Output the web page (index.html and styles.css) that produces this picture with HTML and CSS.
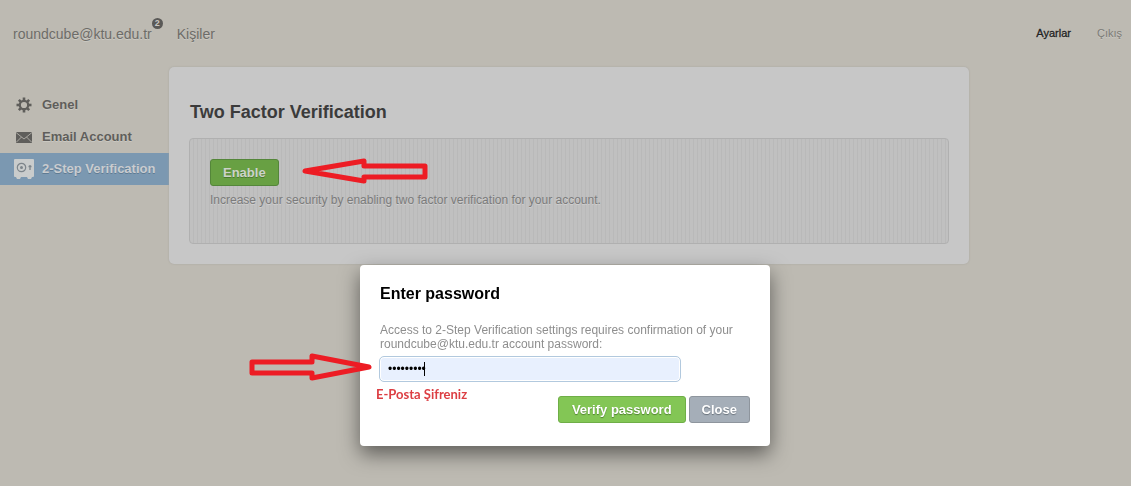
FILE: index.html
```html
<!DOCTYPE html>
<html lang="tr">
<head>
<meta charset="utf-8">
<title>Ayarlar</title>
<link rel="stylesheet" href="styles.css">
</head>
<body>
<header class="topbar">
  <nav class="tabs">
    <a class="tab" href="#mail">roundcube@ktu.edu.tr<span class="badge">2</span></a>
    <a class="tab" href="#contacts">Kişiler</a>
  </nav>
  <nav class="account">
    <a class="account-link current" href="#settings">Ayarlar</a>
    <a class="account-link" href="#logout">Çıkış</a>
  </nav>
</header>
<div class="layout">
  <nav class="sidebar">
    <a class="side-link" href="#general">
      <svg class="side-icon" viewBox="0 0 20 20" aria-hidden="true">
        <g fill="#5f5e5b">
          <rect x="8.7" y="2.500" width="2.600" height="15"/>
          <rect x="2.500" y="8.700" width="15" height="2.600"/>
          <rect x="8.700" y="2.700" width="2.600" height="14.600" transform="rotate(45 10 10)"/>
          <rect x="8.700" y="2.700" width="2.600" height="14.600" transform="rotate(-45 10 10)"/>
        </g>
        <circle cx="10" cy="10" r="4.200" fill="#bdbab2" stroke="#5f5e5b" stroke-width="2.200"/>
      </svg>
      Genel
    </a>
    <a class="side-link" href="#email">
      <svg class="side-icon" viewBox="0 0 20 20" aria-hidden="true">
        <rect x="2" y="5" width="16" height="11" fill="#5f5e5b"/>
        <path d="M2 5.500l8 6.500 8-6.500M2 15.500l5.500-5.500M18 15.500L12.500 10" fill="none" stroke="#bdbab2" stroke-width="0.800"/>
      </svg>
      Email Account
    </a>
    <a class="side-link selected" href="#verification">
      <svg class="side-icon" viewBox="0 0 20 20" aria-hidden="true">
        <path d="M1 0h18q1 0 1 1v16q0 1-1 1h-1l-1 2h-3l-1-2H7l-1 2H3l-1-2H1q-1 0-1-1V1q0-1 1-1z" fill="#c9cccc"/>
        <circle cx="7.500" cy="8.500" r="4.200" fill="none" stroke="#7d858b" stroke-width="1.200"/>
        <circle cx="7.500" cy="8.500" r="1.500" fill="#7d858b"/>
        <path d="M16 11V6M14.500 7.500h3" fill="none" stroke="#7d858b" stroke-width="1.300"/>
      </svg>
      2-Step Verification
    </a>
  </nav>
  <main class="panel">
    <h1 class="panel-title">Two Factor Verification</h1>
    <section class="well">
      <button class="btn btn-dim" type="button">Enable</button>
      <p class="hint">Increase your security by enabling two factor verification for your account.</p>
    </section>
  </main>
</div>
<form class="dialog" role="dialog" aria-labelledby="dialog-title">
  <h2 class="dialog-title" id="dialog-title">Enter password</h2>
  <label class="dialog-text" for="password">Access to 2-Step Verification settings requires confirmation of your roundcube@ktu.edu.tr account password:</label>
  <div class="field">
    <input class="password" id="password" type="password" value="123456789">
    <span class="caret"></span>
  </div>
  <p class="note">E-Posta Şifreniz</p>
  <div class="actions">
    <button class="btn btn-green" type="submit">Verify password</button>
    <button class="btn btn-gray" type="button">Close</button>
  </div>
</form>
<svg class="arrow arrow-enable" viewBox="0 0 128 28" aria-hidden="true">
  <path d="M4 14L63 4V9H124V20H63V24Z"/>
</svg>
<svg class="arrow arrow-password" viewBox="0 0 128 30" aria-hidden="true">
  <path d="M121 15L64 4V10H4V21H64V26Z"/>
</svg>
</body>
</html>
```
FILE: styles.css
```css
* {
  box-sizing: border-box;
}

body {
  margin: 0;
  min-height: 100vh;
  background: #bdbab2;
  color: #5f5e5b;
  font: 12px/14px "Liberation Sans", Arial, sans-serif;
}

a {
  color: inherit;
  text-decoration: none;
}

h1, h2, p {
  margin: 0;
}

.topbar {
  display: flex;
  justify-content: space-between;
  align-items: center;
  height: 67px;
  padding: 0 9px 0 13px;
}

.tabs {
  display: flex;
  gap: 25px;
  font-size: 14px;
  line-height: 16px;
  color: #6d6c68;
  text-shadow: 0 1px 0 #cbc9c2;
}

.tab {
  position: relative;
}

.badge {
  position: absolute;
  left: 100%;
  top: -8px;
  width: 11px;
  height: 11px;
  border-radius: 50%;
  background: #5a5957;
  color: #c9c7c1;
  font-size: 9px;
  font-weight: bold;
  line-height: 11px;
  text-align: center;
  text-shadow: none;
}

.account {
  display: flex;
  gap: 26px;
  font-size: 11px;
  line-height: 12px;
  padding-bottom: 2px;
  color: #7b7a76;
  text-shadow: 0 1px 0 #cbc9c2;
}

.account-link.current {
  color: #222;
  -webkit-text-stroke: 0.3px #222;
}

.layout {
  display: flex;
  align-items: flex-start;
}

.sidebar {
  flex: 0 0 169px;
  padding-top: 22px;
}

.side-link {
  display: flex;
  align-items: center;
  gap: 8px;
  height: 32px;
  padding-left: 14px;
  font-size: 13px;
  font-weight: bold;
  white-space: nowrap;
  text-shadow: 0 1px 0 #cbc9c2;
}

.side-link.selected {
  background: #7b98b1;
  color: #c9cccf;
  text-shadow: 0 1px 0 #5f7b93;
}

.side-icon {
  flex: none;
  width: 20px;
  height: 20px;
}

.panel {
  flex: 0 1 800px;
  padding: 34px 20px 20px;
  border-radius: 5px;
  background: #c7c7c7;
  box-shadow: 0 0 2px #a5a39c;
}

.panel-title {
  margin: 0 0 15px 1px;
  font-size: 18px;
  line-height: 22px;
  color: #3b3b3b;
}

.well {
  min-height: 106px;
  padding: 20px;
  border: 1px solid #b0b0b0;
  border-radius: 4px;
  background: repeating-linear-gradient(90deg, #c0c0c0 0 3px, #b9b9b9 3px 4px);
}

.hint {
  margin-top: 7px;
  color: #7b7b7b;
  text-shadow: 0 1px 0 #cfcfcf;
}

.btn {
  height: 27px;
  padding: 0 12px;
  border: 1px solid;
  border-radius: 3px;
  font: bold 13px/15px "Liberation Sans", Arial, sans-serif;
  color: #fff;
}

.btn-dim {
  display: block;
  border-color: #54863a;
  background: #68a043;
  color: #cdd3c9;
  text-shadow: 0 1px 0 #4c7931;
}

.btn-green {
  padding: 0 13px;
  border-color: #6fae47;
  background: #83c655;
  text-shadow: 0 1px 1px #4f8030;
}

.btn-gray {
  border-color: #8e959d;
  background: #a5aeb8;
  text-shadow: 0 1px 1px #68717a;
}

.dialog {
  position: fixed;
  top: 265px;
  left: 0;
  right: 1px;
  width: 410px;
  max-width: 100%;
  margin: 0 auto;
  padding: 19px 20px 23px;
  border-radius: 4px;
  background: #fff;
  box-shadow: 0 8px 20px rgba(0, 0, 0, 0.5);
}

.dialog-title {
  margin-bottom: 19px;
  font-size: 16px;
  line-height: 20px;
  color: #000;
}

.dialog-text {
  display: block;
  color: #8e8e8e;
}

.field {
  position: relative;
  width: 302px;
  margin: 5px 0 0 -1px;
}

.password {
  display: block;
  width: 100%;
  height: 26px;
  padding: 0 8px;
  border: 1px solid #b2c9de;
  border-radius: 5px;
  outline: none;
  background: #e8f0fe;
  box-shadow: inset 0 0 0 1px #fff;
  color: #000;
  font: 12px "Liberation Sans", Arial, sans-serif;
}

.caret {
  position: absolute;
  top: 6px;
  left: 45px;
  width: 1px;
  height: 14px;
  background: #000;
}

.note {
  margin: 4px 0 0 -4px;
  font: bold 13px/16px Lato, sans-serif;
  color: #dc3e43;
}

.actions {
  display: flex;
  justify-content: flex-end;
  gap: 3px;
  margin-top: -6px;
}

.arrow {
  position: absolute;
  fill: none;
  stroke: #ed1c24;
  stroke-width: 5;
  stroke-linejoin: round;
}

.arrow-enable {
  top: 157px;
  left: 301px;
  width: 128px;
  height: 28px;
}

.arrow-password {
  top: 352px;
  left: 248px;
  width: 128px;
  height: 30px;
}
```
